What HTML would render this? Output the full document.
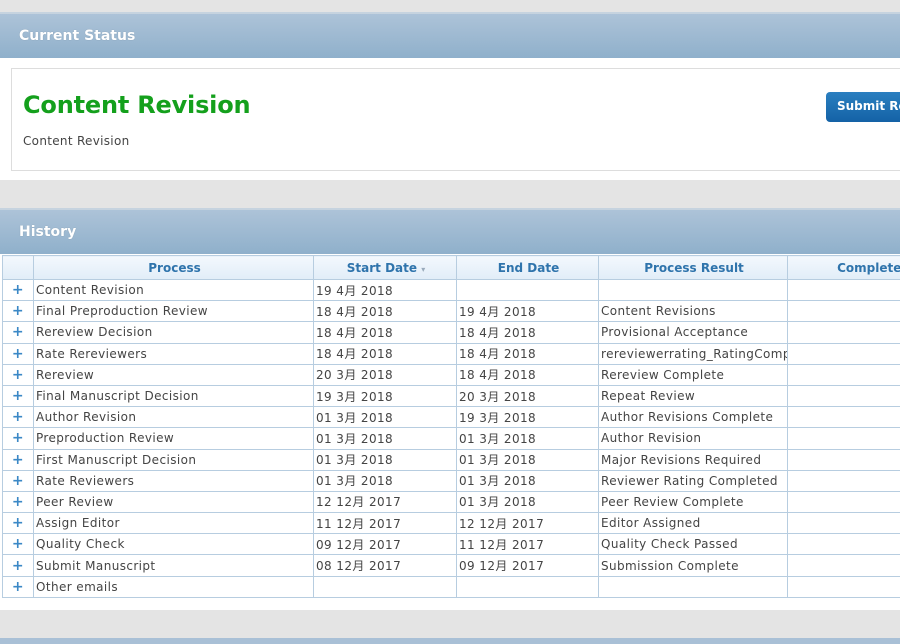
<!DOCTYPE html>
<html><head><meta charset="utf-8"><style>
*{margin:0;padding:0;box-sizing:border-box}
body{width:900px;height:644px;overflow:hidden;background:#e4e4e4;font-family:"DejaVu Sans","Noto Sans CJK SC",sans-serif;position:relative}
.hdr{position:absolute;left:0;width:900px;height:46px;background:linear-gradient(#adc3d8,#8fb0cb);border-top:2px solid #c6d3df;color:#fff;font-weight:bold;font-size:14px;padding:14px 0 0 19px;text-shadow:0 0 1px rgba(0,0,0,.2)}
.panel{position:absolute;left:0;width:900px;background:#fff}
.box{position:absolute;left:11px;top:68px;width:900px;height:103px;border:1px solid #ddd;background:#fff}
h1{position:absolute;left:23px;top:91px;font-size:24px;color:#14a01c;font-weight:bold;letter-spacing:-0.2px}
.sub{position:absolute;left:23px;top:134px;font-size:12px;color:#444;letter-spacing:0.3px}
.btn{position:absolute;left:826px;top:92px;width:100px;height:30px;background:linear-gradient(#2a7fc0,#1462a6);border-radius:4px;color:#fff;font-weight:bold;font-size:12px;padding:7px 0 0 11px}
table{position:absolute;left:2px;top:255px;width:955px;border-collapse:collapse;font-size:12px;color:#444;table-layout:fixed;letter-spacing:0.4px}
td,th{border:1px solid #b7cde0;height:21.2px;padding:0 0 0 2px;white-space:nowrap;overflow:hidden}
th{background:linear-gradient(#f3f8fd,#e1edf8);color:#2f74ac;font-weight:bold;height:24px;font-size:12px;letter-spacing:0}
td.p{color:#3b88c6;text-align:center;font-weight:bold;font-size:14px;padding:0}
</style></head><body>
<div class="hdr" style="top:12px">Current Status</div>
<div class="panel" style="top:58px;height:122px"></div>
<div class="box"></div>
<h1>Content Revision</h1>
<div class="sub">Content Revision</div>
<div class="btn">Submit Re</div>
<div class="hdr" style="top:208px">History</div>
<div class="panel" style="top:254px;height:356px"></div>
<table>
<colgroup><col style="width:31px"><col style="width:280px"><col style="width:143px"><col style="width:142px"><col style="width:189px"><col style="width:170px"></colgroup>
<tr><th></th><th>Process</th><th>Start Date <span style="font-size:8px;color:#9ab">▾</span></th><th>End Date</th><th>Process Result</th><th>Completed</th></tr>
<tr><td class="p">+</td><td>Content Revision</td><td>19 4月 2018</td><td></td><td></td><td></td></tr>
<tr><td class="p">+</td><td>Final Preproduction Review</td><td>18 4月 2018</td><td>19 4月 2018</td><td>Content Revisions</td><td></td></tr>
<tr><td class="p">+</td><td>Rereview Decision</td><td>18 4月 2018</td><td>18 4月 2018</td><td>Provisional Acceptance</td><td></td></tr>
<tr><td class="p">+</td><td>Rate Rereviewers</td><td>18 4月 2018</td><td>18 4月 2018</td><td>rereviewerrating_RatingComp</td><td></td></tr>
<tr><td class="p">+</td><td>Rereview</td><td>20 3月 2018</td><td>18 4月 2018</td><td>Rereview Complete</td><td></td></tr>
<tr><td class="p">+</td><td>Final Manuscript Decision</td><td>19 3月 2018</td><td>20 3月 2018</td><td>Repeat Review</td><td></td></tr>
<tr><td class="p">+</td><td>Author Revision</td><td>01 3月 2018</td><td>19 3月 2018</td><td>Author Revisions Complete</td><td></td></tr>
<tr><td class="p">+</td><td>Preproduction Review</td><td>01 3月 2018</td><td>01 3月 2018</td><td>Author Revision</td><td></td></tr>
<tr><td class="p">+</td><td>First Manuscript Decision</td><td>01 3月 2018</td><td>01 3月 2018</td><td>Major Revisions Required</td><td></td></tr>
<tr><td class="p">+</td><td>Rate Reviewers</td><td>01 3月 2018</td><td>01 3月 2018</td><td>Reviewer Rating Completed</td><td></td></tr>
<tr><td class="p">+</td><td>Peer Review</td><td>12 12月 2017</td><td>01 3月 2018</td><td>Peer Review Complete</td><td></td></tr>
<tr><td class="p">+</td><td>Assign Editor</td><td>11 12月 2017</td><td>12 12月 2017</td><td>Editor Assigned</td><td></td></tr>
<tr><td class="p">+</td><td>Quality Check</td><td>09 12月 2017</td><td>11 12月 2017</td><td>Quality Check Passed</td><td></td></tr>
<tr><td class="p">+</td><td>Submit Manuscript</td><td>08 12月 2017</td><td>09 12月 2017</td><td>Submission Complete</td><td></td></tr>
<tr><td class="p">+</td><td>Other emails</td><td></td><td></td><td></td><td></td></tr>
</table>
<div style="position:absolute;left:0;top:638px;width:900px;height:6px;background:#a9c0d6"></div>
</body></html>
